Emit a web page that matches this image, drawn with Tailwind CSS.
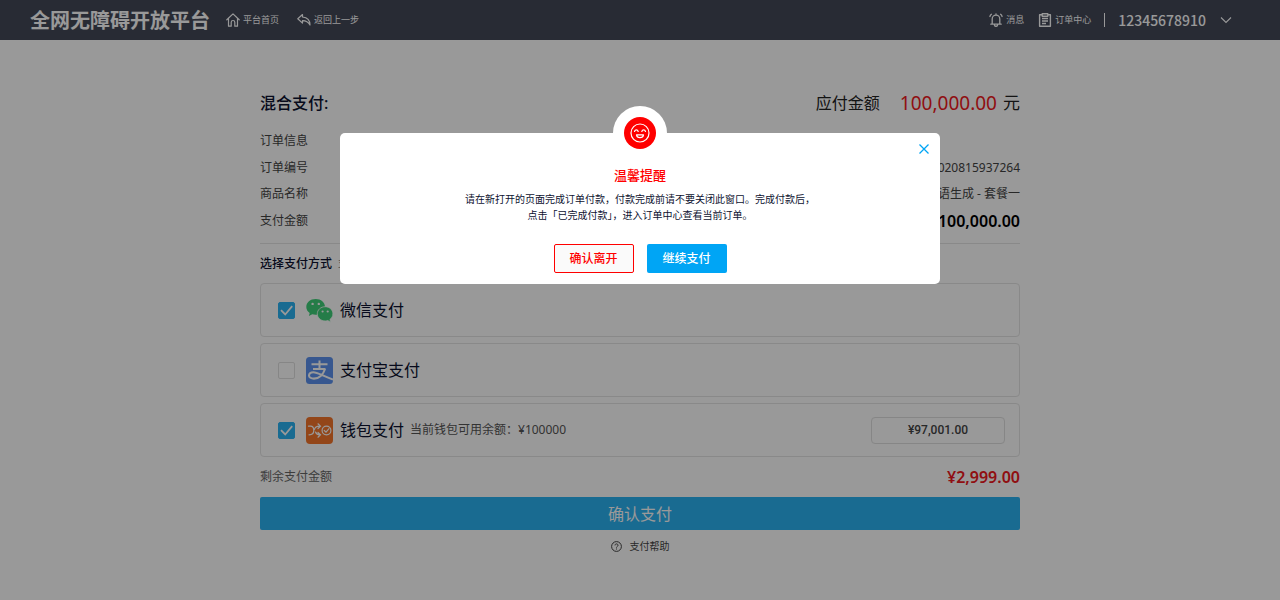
<!DOCTYPE html>
<html lang="zh-CN">
<head>
    <meta charset="UTF-8">
    <meta name="viewport" content="width=device-width, initial-scale=1.0">
    <title>混合支付</title>
    <script src="https://cdn.jsdelivr.net/npm/@tailwindcss/browser@4"></script>
</head>
<body class="bg-white font-['Noto_Sans','Noto_Sans_CJK_SC',sans-serif] text-xs text-[#444]">
    <header class="flex h-10 items-center justify-between bg-[#434858] pl-[30px] pr-12 font-['Noto_Sans_CJK_SC',sans-serif] text-[9px] text-white">
        <div class="flex items-center">
            <h1 class="mr-4 text-xl font-bold">全网无障碍开放平台</h1>
            <nav class="flex items-center gap-[18px]">
                <a href="#" class="flex items-center gap-[3px]">
                    <svg class="size-[14px]" viewBox="0 0 14 14" fill="none" stroke="currentColor" stroke-width="1.2" stroke-linejoin="round" stroke-linecap="round"><path d="M.8 6.800 7 .9l6.200 5.900M2.500 5.500v7.700h2.700V9.300a1.800 1.800 0 0 1 3.600 0v3.900h2.700V5.500"/></svg>
                    平台首页
                </a>
                <a href="#" class="flex items-center gap-[3px]">
                    <svg class="size-[14px]" viewBox="0 0 14 14" fill="none" stroke="currentColor" stroke-width="1.2" stroke-linejoin="round"><path d="M5.500 1.500.8 5.800l4.700 4.300V7.700c3.300-.1 5.500 1 7.500 4.300 0-4.300-2.800-7.500-7.500-8z"/></svg>
                    返回上一步
                </a>
            </nav>
        </div>
        <div class="flex items-center">
            <a href="#" class="mr-[14px] flex items-center gap-[3px]">
                <svg class="size-[14px]" viewBox="0 0 14 14" fill="none" stroke="currentColor" stroke-width="1.300" stroke-linecap="round" stroke-linejoin="round"><path d="M7 .8v1M1.800 11.200h10.400M3.200 11V6a3.800 3.800 0 0 1 7.600 0v5M5.500 12.200c.4 1.400 2.600 1.400 3 0M.9 3.500c.3-1 .8-1.700 1.500-2.200M13.100 3.500c-.3-1-.8-1.700-1.500-2.200"/></svg>
                消息
            </a>
            <a href="#" class="flex items-center gap-[3px]">
                <svg class="size-[14px]" viewBox="0 0 14 14" fill="none" stroke="currentColor" stroke-width="1.400" stroke-linejoin="round"><path d="M4 1.800H1.600v11.400h10.800V1.800H10M4.200.8h5.600v2.400H4.200zM4 5.500h6M4 8h6M4 10.500h4"/></svg>
                订单中心
            </a>
            <span class="mx-[13px] h-[14px] w-px bg-white"></span>
            <button type="button" class="flex items-center gap-[14px] text-sm font-medium">
                12345678910
                <svg class="h-2 w-3" viewBox="0 0 12 8" fill="none" stroke="currentColor" stroke-width="1.100"><path d="m1 1.500 5 5 5-5"/></svg>
            </button>
        </div>
    </header>

    <main class="mx-auto w-full max-w-[760px] pt-[50px]">
        <div class="flex h-[26px] items-center justify-between text-base text-[#222]">
            <h2 class="font-medium text-[#0d1230]">混合支付:</h2>
            <p class="flex items-center">应付金额<span class="ml-5 mr-[6px] text-[19px] text-[#f01820]">100,000.00</span><span class="text-[17px]">元</span></p>
        </div>

        <dl class="mt-[11px] border-b border-[#e5e5e5] pb-[9px]">
            <div class="flex h-[27px] items-center justify-between"><dt>订单信息</dt><dd></dd></div>
            <div class="flex h-[27px] items-center justify-between"><dt>订单编号</dt><dd>2020020815937264</dd></div>
            <div class="flex h-[26px] items-center justify-between"><dt>商品名称</dt><dd>手语生成 - 套餐一</dd></div>
            <div class="flex h-[27px] items-center justify-between"><dt>支付金额</dt><dd class="text-base font-semibold text-black">¥100,000.00</dd></div>
        </dl>

        <form>
            <div class="flex h-[39px] items-center gap-2">
                <h3 class="font-medium text-[#0d1230]">选择支付方式</h3>
                <span class="-ml-[2px] text-[10px] text-[#888]">支持混合支付</span>
            </div>
            <div class="space-y-[6px]">
                <div class="flex h-[54px] items-center rounded border border-[#e5e5e5] pl-[17px] pr-[14px]">
                    <label class="flex items-center text-base text-[#0d1230]">
                        <span class="mr-[11px] grid size-[17px] place-items-center">
                            <input type="checkbox" checked class="peer col-start-1 row-start-1 size-[17px] appearance-none rounded-[2px] border border-[#e0e0e0] checked:border-[#2bb2f2] checked:bg-[#2bb2f2]">
                            <svg class="pointer-events-none col-start-1 row-start-1 hidden size-[13px] peer-checked:block" viewBox="0 0 13 13" fill="none" stroke="#fff" stroke-width="1.800"><path d="m1 6.200 4.200 4.300 7-8.300"/></svg>
                        </span>
                        <svg class="mr-[7px] size-[27px]" viewBox="0 0 27 27" fill="#3ecf78">
                            <path d="M9.700 2C4.300 2 .3 5.500.3 9.900c0 2.500 1.300 4.600 3.400 6l-.8 3 3.300-1.700c1.100.3 2.200.5 3.500.5 5.300 0 9.300-3.500 9.300-7.800C19 5.500 15 2 9.700 2z"/>
                            <path stroke="#fff" stroke-width=".8" d="M19.200 9.700c-4.500 0-7.900 3.200-7.900 7.100s3.400 7.200 7.900 7.200c1 0 1.900-.2 2.700-.4l2.700 1.700-.7-2.800c1.900-1.300 3-3.400 3-5.700 0-3.900-3.300-7.100-7.700-7.100z"/>
                            <g fill="#fff"><circle cx="6.600" cy="6.900" r="1.200"/><circle cx="12.800" cy="6.900" r="1.200"/><circle cx="16.600" cy="14.500" r="1.100"/><circle cx="21.700" cy="14.500" r="1.100"/></g>
                        </svg>
                        微信支付
                    </label>
                </div>
                <div class="flex h-[54px] items-center rounded border border-[#e5e5e5] pl-[17px] pr-[14px]">
                    <label class="flex items-center text-base text-[#0d1230]">
                        <span class="mr-[11px] grid size-[17px] place-items-center">
                            <input type="checkbox" class="peer col-start-1 row-start-1 size-[17px] appearance-none rounded-[2px] border border-[#e0e0e0] checked:border-[#2bb2f2] checked:bg-[#2bb2f2]">
                            <svg class="pointer-events-none col-start-1 row-start-1 hidden size-[13px] peer-checked:block" viewBox="0 0 13 13" fill="none" stroke="#fff" stroke-width="1.800"><path d="m1 6.200 4.200 4.300 7-8.300"/></svg>
                        </span>
                        <svg class="mr-[7px] size-[27px]" viewBox="0 0 27 27">
                            <rect width="27" height="27" rx="3.500" fill="#5c92ee"/>
                            <g fill="none" stroke="#fff"><path stroke-width="2" d="M13.500 3.500v8.500M5.500 7.200h16M7 12h12.500"/><path stroke-width="2.100" d="M19 12c-1.800 5.500-6 9.600-11 9.600-3 0-5-1.300-5-3.200s1.700-3.200 4.300-3.200c4 0 8.700 3.300 19.700 7.300"/></g>
                        </svg>
                        支付宝支付
                    </label>
                </div>
                <div class="flex h-[54px] items-center justify-between rounded border border-[#e5e5e5] pl-[17px] pr-[14px]">
                    <label class="flex items-center text-base text-[#0d1230]">
                        <span class="mr-[11px] grid size-[17px] place-items-center">
                            <input type="checkbox" checked class="peer col-start-1 row-start-1 size-[17px] appearance-none rounded-[2px] border border-[#e0e0e0] checked:border-[#2bb2f2] checked:bg-[#2bb2f2]">
                            <svg class="pointer-events-none col-start-1 row-start-1 hidden size-[13px] peer-checked:block" viewBox="0 0 13 13" fill="none" stroke="#fff" stroke-width="1.800"><path d="m1 6.200 4.200 4.300 7-8.300"/></svg>
                        </span>
                        <svg class="mr-[7px] size-[27px]" viewBox="0 0 27 27">
                            <rect width="27" height="27" rx="4" fill="#f5762b"/>
                            <g fill="none" stroke="#fff" stroke-width="1.200" stroke-linecap="round"><path d="M2.500 9.200h2c3 0 3.300 2 3.300 4.300s-.8 4.300-4.800 4.300M8.500 12.500c.5-2.500 2-3.300 5-3.300M12 6.800l2.500 2.400-2.500 2.300M9.500 15c.8 2 2 2.800 4.500 2.800M12 15.500l2.500 2.300-2.500 2.400"/><circle cx="20.500" cy="13.500" r="4.400"/><path d="m18.300 13.500 1.700 1.700 3-3.500"/></g>
                        </svg>
                        钱包支付
                        <span class="ml-[6px] text-xs text-[#555]">当前钱包可用余额：¥100000</span>
                    </label>
                    <input type="text" value="¥97,001.00" aria-label="钱包支付金额" class="h-[27px] w-[134px] rounded border border-[#e0e0e0] text-center font-[Roboto,sans-serif] text-xs font-medium text-[#444]">
                </div>
            </div>
            <div class="flex h-10 items-center justify-between">
                <span class="text-[#666]">剩余支付金额</span>
                <span class="text-base font-semibold text-[#f01820]">¥2,999.00</span>
            </div>
            <button type="button" class="h-[33px] w-full rounded-[2px] bg-[#2bb2f2] text-base text-white">确认支付</button>
        </form>
        <a href="#" class="mt-[10px] flex items-center justify-center gap-2 text-[10px]">
            <svg class="size-[11px]" viewBox="0 0 11 11" fill="none" stroke="currentColor"><circle cx="5.500" cy="5.500" r="4.900"/><path d="M4 4.400c0-2 3-2 3 0 0 1.100-1.500 1-1.500 2.200M5.500 7.500v1"/></svg>
            支付帮助
        </a>
    </main>

    <div class="fixed inset-0 flex items-start justify-center bg-black/40 pt-[133px]">
        <section role="dialog" aria-labelledby="dialog-title" class="relative w-full max-w-[600px] rounded-[5px] bg-white pb-[11px] pt-8 text-center">
            <div class="absolute inset-x-0 -top-[27px] mx-auto grid size-[54px] place-items-center rounded-full bg-white">
                <div class="grid size-8 place-items-center rounded-full bg-[#ff0000]">
                    <svg class="size-5" viewBox="0 0 20 20" fill="none" stroke="#fff" stroke-width="1.200" stroke-linecap="round"><circle cx="10" cy="10" r="9"/><path d="M4.500 8.500c.7-2.200 3-2.200 3.700 0M11.800 8.500c.7-2.200 3-2.200 3.700 0"/><path d="M6.500 11.800h7c-.5 3.700-6.500 3.700-7 0z" stroke-linejoin="round"/></svg>
                </div>
            </div>
            <button type="button" aria-label="关闭" class="absolute right-[11px] top-[11px] text-[#00a5f5]">
                <svg class="size-[10px]" viewBox="0 0 10 10" fill="none" stroke="currentColor" stroke-width="1.300"><path d="m.5.5 9 9m0-9-9 9"/></svg>
            </button>
            <h2 id="dialog-title" class="text-[13px]/5 font-medium text-[#ff0000]">温馨提醒</h2>
            <p class="mt-[6px] text-[10px]/4 text-[#0d1230]">请在新打开的页面完成订单付款，付款完成前请不要关闭此窗口。完成付款后，<br>点击「已完成付款」，进入订单中心查看当前订单。</p>
            <div class="mt-[21px] flex justify-center gap-[13px] font-medium">
                <button type="button" class="h-[29px] w-20 rounded-[2px] border border-[#ff0000] bg-[#fafafa] text-[#ff0000]">确认离开</button>
                <button type="button" class="h-[29px] w-20 rounded-[2px] bg-[#00a5f5] text-white">继续支付</button>
            </div>
        </section>
    </div>
</body>
</html>
